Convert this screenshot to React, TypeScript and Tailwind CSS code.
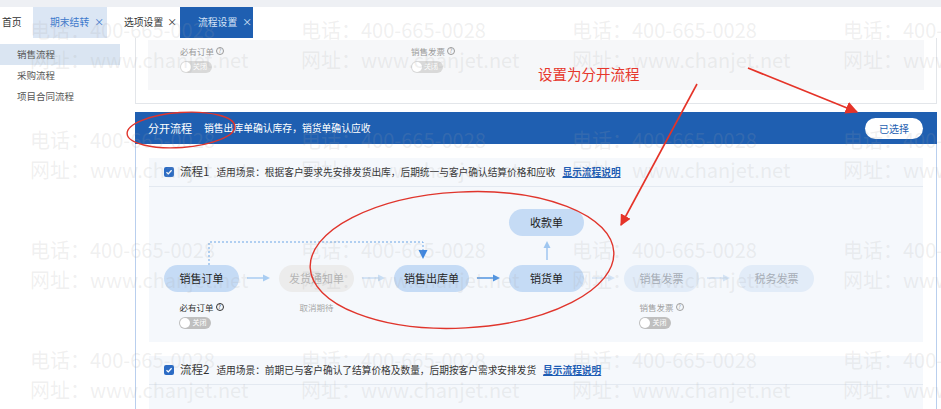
import React from "react";

const FONT = "font-['Noto_Sans_CJK_SC','Noto_Sans',sans-serif]";

function Help() {
  return (
    <span className="ml-[2px] inline-flex h-[8px] w-[8px] items-center justify-center rounded-full border border-current text-[6px] leading-none">
      ?
    </span>
  );
}

function Toggle({ faded }: { faded?: boolean }) {
  return (
    <div
      className={`mt-[3px] flex h-[12px] w-[32px] items-center rounded-full pl-[1px] ${
        faded ? "bg-[#d9d9d9]" : "bg-[#bfbfbf]"
      }`}
    >
      <span className="h-[10px] w-[10px] rounded-full bg-white" />
      <span className="ml-[2px] text-[7px] leading-none text-white">关闭</span>
    </div>
  );
}

function HArrow({ color }: { color: string }) {
  return (
    <svg width="24" height="8" viewBox="0 0 24 8">
      <line x1="0" y1="4" x2="17" y2="4" stroke={color} strokeWidth="1.5" />
      <path d="M16 0.5 L23 4 L16 7.5 Z" fill={color} />
    </svg>
  );
}

type Tone = "on" | "off" | "faint";

function FlowNode({ label, tone }: { label: string; tone: Tone }) {
  const cls =
    tone === "on"
      ? "bg-[#c5dbf5] text-[#222]"
      : tone === "off"
      ? "bg-[#ececec] text-[#b4b4b4]"
      : "bg-[#e2ecf8] text-[#a6adb6]";
  return (
    <div className={`flex h-[27px] w-[75px] items-center justify-center rounded-full text-[11px] ${cls}`}>
      {label}
    </div>
  );
}

function Gap({ color }: { color: string }) {
  return (
    <div className="flex w-[40px] justify-center pt-[65px]">
      <HArrow color={color} />
    </div>
  );
}

function Check() {
  return (
    <span className="flex h-[10px] w-[10px] items-center justify-center rounded-[2px] bg-[#2b6bc4]">
      <svg width="8" height="8" viewBox="0 0 8 8">
        <path d="M1.5 4.2 L3.3 5.9 L6.6 2.2" fill="none" stroke="white" strokeWidth="1.3" />
      </svg>
    </span>
  );
}

function FlowHeader({ n, text }: { n: string; text: string }) {
  return (
    <div className="flex h-[29px] items-center border-b border-[#e3e9f1] pl-[15px]">
      <Check />
      <span className="ml-[6px] text-[11.5px] text-[#333]">流程{n}</span>
      <span className="ml-[7px] text-[9.7px] text-[#333]">适用场景：{text}</span>
      <span className="ml-[7px] text-[9.7px] font-bold text-[#1d5cb4] underline">显示流程说明</span>
    </div>
  );
}

function Watermark() {
  const cells = Array.from({ length: 16 });
  return (
    <div className="pointer-events-none absolute inset-0 overflow-hidden pl-[30px] pt-[15px]">
      <div className="grid grid-cols-[repeat(4,271px)] auto-rows-[110px]">
        {cells.map((_, i) => (
          <div
            key={i}
            className="flex flex-col whitespace-nowrap text-[20px] leading-[30px] text-[rgba(165,165,165,0.17)]"
          >
            <span>电话：400-665-0028</span>
            <span>网址：www.chanjet.net</span>
          </div>
        ))}
      </div>
    </div>
  );
}

function Marks() {
  return (
    <svg className="pointer-events-none absolute inset-0" width="941" height="409" viewBox="0 0 941 409">
      <defs>
        <marker id="head" viewBox="0 0 10 10" refX="9" refY="5" markerWidth="7" markerHeight="7" orient="auto">
          <path d="M0 0 L10 5 L0 10 Z" fill="#e53328" />
        </marker>
      </defs>
      <ellipse cx="181" cy="130" rx="54" ry="17.5" transform="rotate(-4 181 130)" fill="none" stroke="#e0352c" strokeWidth="1.4" />
      <ellipse cx="462" cy="260" rx="152" ry="68" transform="rotate(-3 462 260)" fill="none" stroke="#e0352c" strokeWidth="1.4" />
      <line x1="697" y1="84" x2="621" y2="225" stroke="#e53328" strokeWidth="1.6" markerEnd="url(#head)" />
      <line x1="748" y1="68" x2="857" y2="112" stroke="#e53328" strokeWidth="1.8" markerEnd="url(#head)" />
    </svg>
  );
}

export default function App() {
  return (
    <div className={`relative h-[409px] w-[941px] overflow-hidden bg-white ${FONT}`}>
      <div className="h-[7px] bg-[#eef0f4]" />

      {/* tab strip */}
      <div className="flex h-[31px] items-stretch text-[9.8px]">
        <div className="flex w-[33px] items-center pl-[2px] text-[#333]">首页</div>
        <div className="flex w-[74px] items-center bg-[#dbe6f4] pl-[17px] text-[#3b78cc]">
          期末结转<span className="ml-[5px]">×</span>
        </div>
        <div className="flex w-[73px] items-center pl-[17px] text-[#333]">
          选项设置<span className="ml-[4px]">×</span>
        </div>
        <div className="flex w-[73px] items-center bg-[#1f5fb1] pl-[18px] text-[#d6e4f7]">
          流程设置<span className="ml-[5px]">×</span>
        </div>
      </div>

      <div className="flex">
        {/* side menu */}
        <div className="w-[135px] pt-[6px] text-[9.5px] text-[#555]">
          <div className="flex h-[21px] w-[120px] items-center bg-[#dae5f2] pl-[17px]">销售流程</div>
          <div className="flex h-[21px] w-[120px] items-center pl-[17px]">采购流程</div>
          <div className="flex h-[21px] w-[120px] items-center pl-[17px]">项目合同流程</div>
        </div>

        <div className="w-[802px]">
          {/* previous scheme (tail) */}
          <div className="h-[66px] border-x border-b border-[#e3e6ea] px-[12px] pt-[2px]">
            <div className="flex h-[50px] bg-[#f6f7f9] pt-[5px] text-[8.5px] text-[#9a9a9a]">
              <div className="ml-[32px] flex flex-col items-start">
                <span className="flex items-center">
                  必有订单
                  <Help />
                </span>
                <Toggle faded />
              </div>
              <div className="ml-[187px] flex flex-col items-start">
                <span className="flex items-center">
                  销售发票
                  <Help />
                </span>
                <Toggle faded />
              </div>
            </div>
          </div>

          {/* selected scheme */}
          <div className="mt-[8px] flex h-[32px] items-center bg-[#1f5fb1] pl-[13px] pr-[14px] text-white">
            <span className="text-[11px]">分开流程</span>
            <span className="ml-[12px] text-[9.8px]">销售出库单确认库存，销货单确认应收</span>
            <span className="ml-auto flex h-[21px] w-[58px] items-center justify-center rounded-full bg-white text-[10px] text-[#1f5fb1]">
              已选择
            </span>
          </div>

          <div className="h-[300px] border-x border-[#b9cfee] px-[13px] pt-[14px]">
            <div className="bg-[#f5f8fc]">
              <FlowHeader n="1" text="根据客户要求先安排发货出库，后期统一与客户确认结算价格和应收" />
              <div className="relative h-[155px]">
                <svg className="absolute left-0 top-0" width="300" height="90" viewBox="0 0 300 90">
                  <path d="M60 78 L60 55 L274 55 L274 64" fill="none" stroke="#6aa5e6" strokeWidth="1" strokeDasharray="2 2" />
                  <path d="M269.5 63 L278.5 63 L274 72 Z" fill="#3f86de" />
                </svg>
                <div className="flex items-start pl-[15px] pt-[22px]">
                  <div className="flex w-[75px] flex-col items-center pt-[56px]">
                    <FlowNode label="销售订单" tone="on" />
                    <div className="mt-[9px] flex flex-col items-start text-[8.5px] text-[#333]">
                      <span className="flex items-center">
                        必有订单
                        <Help />
                      </span>
                      <Toggle />
                    </div>
                  </div>
                  <Gap color="#a9cdf2" />
                  <div className="flex w-[75px] flex-col items-center pt-[56px]">
                    <FlowNode label="发货通知单" tone="off" />
                    <span className="mt-[9px] text-[8.5px] text-[#a8a8a8]">取消期待</span>
                  </div>
                  <Gap color="#c9def4" />
                  <div className="flex w-[75px] flex-col items-center pt-[56px]">
                    <FlowNode label="销售出库单" tone="on" />
                  </div>
                  <Gap color="#4f94e2" />
                  <div className="flex w-[75px] flex-col items-center">
                    <FlowNode label="收款单" tone="on" />
                    <div className="flex h-[29px] items-center justify-center">
                      <svg width="8" height="20" viewBox="0 0 8 20">
                        <line x1="4" y1="6" x2="4" y2="19" stroke="#9fc6f0" strokeWidth="1.5" />
                        <path d="M0.5 7 L4 0 L7.5 7 Z" fill="#9fc6f0" />
                      </svg>
                    </div>
                    <FlowNode label="销货单" tone="on" />
                  </div>
                  <Gap color="#d3e3f5" />
                  <div className="flex w-[75px] flex-col items-center pt-[56px]">
                    <FlowNode label="销售发票" tone="faint" />
                    <div className="mt-[9px] flex flex-col items-start text-[8.5px] text-[#a0a0a0]">
                      <span className="flex items-center">
                        销售发票
                        <Help />
                      </span>
                      <Toggle />
                    </div>
                  </div>
                  <Gap color="#d3e3f5" />
                  <div className="flex w-[75px] flex-col items-center pt-[56px]">
                    <FlowNode label="税务发票" tone="faint" />
                  </div>
                </div>
              </div>
            </div>

            <div className="mt-[14px] h-[80px] bg-[#f5f8fc]">
              <FlowHeader n="2" text="前期已与客户确认了结算价格及数量，后期按客户需求安排发货" />
            </div>
          </div>
        </div>
      </div>

      <Watermark />
      <Marks />
      <span className="pointer-events-none absolute left-[538px] top-[63px] text-[14.5px] text-[#e6372c]">
        设置为分开流程
      </span>
    </div>
  );
}
